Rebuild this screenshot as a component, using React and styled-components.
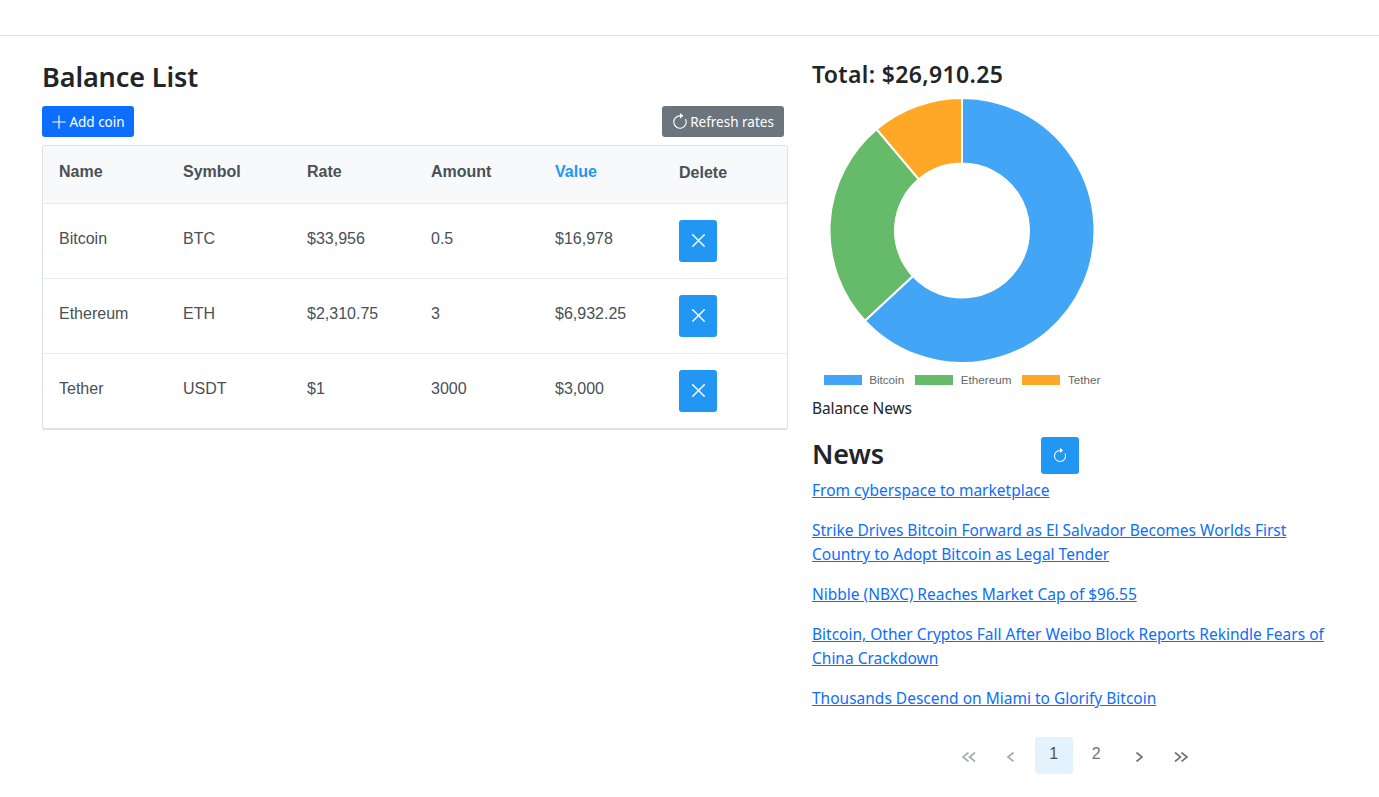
import React from 'react'
import styled, { createGlobalStyle } from 'styled-components'
import { BsPlusLg, BsArrowClockwise } from 'react-icons/bs'
import { X } from 'lucide-react'

const coins = [
  { name: 'Bitcoin', symbol: 'BTC', rate: '$33,956', amount: '0.5', value: '$16,978', raw: 16978, color: '#42A5F5' },
  { name: 'Ethereum', symbol: 'ETH', rate: '$2,310.75', amount: '3', value: '$6,932.25', raw: 6932.25, color: '#66BB6A' },
  { name: 'Tether', symbol: 'USDT', rate: '$1', amount: '3000', value: '$3,000', raw: 3000, color: '#FFA726' },
]

const news = [
  'From cyberspace to marketplace',
  'Strike Drives Bitcoin Forward as El Salvador Becomes Worlds First Country to Adopt Bitcoin as Legal Tender',
  'Nibble (NBXC) Reaches Market Cap of $96.55',
  'Bitcoin, Other Cryptos Fall After Weibo Block Reports Rekindle Fears of China Crackdown',
  'Thousands Descend on Miami to Glorify Bitcoin',
]

const polar = (cx, cy, r, deg) => {
  const rad = ((deg - 90) * Math.PI) / 180
  return [cx + r * Math.cos(rad), cy + r * Math.sin(rad)]
}

const slicePath = (start, end) => {
  const cx = 150
  const cy = 133.5
  const outer = 132.5
  const inner = 67
  const large = end - start > 180 ? 1 : 0
  const [x1, y1] = polar(cx, cy, outer, start)
  const [x2, y2] = polar(cx, cy, outer, end)
  const [x3, y3] = polar(cx, cy, inner, end)
  const [x4, y4] = polar(cx, cy, inner, start)
  return `M${x1} ${y1}A${outer} ${outer} 0 ${large} 1 ${x2} ${y2}L${x3} ${y3}A${inner} ${inner} 0 ${large} 0 ${x4} ${y4}Z`
}

const Donut = () => {
  const total = coins.reduce((sum, c) => sum + c.raw, 0)
  let angle = 0
  return (
    <ChartSvg viewBox="0 0 300 267" width="300" height="267">
      {coins.map((c) => {
        const start = angle
        angle += (c.raw / total) * 360
        return <path key={c.name} d={slicePath(start, angle)} fill={c.color} stroke="#fff" strokeWidth="2" />
      })}
    </ChartSvg>
  )
}

const chevrons = {
  first: 'M6.5 .5 1 5l5.5 4.5M13 .5 7.5 5l5.5 4.5',
  prev: 'M9.5 .5 4 5l5.5 4.5',
  next: 'M4.5 .5 10 5 4.5 9.5',
  last: 'M1 .5 6.5 5 1 9.5M7.5 .5 13 5 7.5 9.5',
}

const Chevron = ({ type }) => (
  <svg width="14" height="10" viewBox="0 0 14 10" fill="none" stroke="currentColor" strokeWidth="1.7">
    <path d={chevrons[type]} />
  </svg>
)

const App = () => {
  return (
    <>
      <GlobalStyle />
      <TopBar />
      <Page>
        <LeftColumn>
          <Title>Balance List</Title>
          <Toolbar>
            <ToolButton $bg="#0d6efd" $width={92}>
              <BsPlusLg size={18} />
              Add coin
            </ToolButton>
            <ToolButton $bg="#6c757d" $width={122}>
              <BsArrowClockwise size={18} />
              Refresh rates
            </ToolButton>
          </Toolbar>
          <TableCard>
            <Table>
              <thead>
                <tr>
                  <HeadCell>Name</HeadCell>
                  <HeadCell>Symbol</HeadCell>
                  <HeadCell>Rate</HeadCell>
                  <HeadCell>Amount</HeadCell>
                  <HeadCell $active>Value</HeadCell>
                  <HeadCell $plain>Delete</HeadCell>
                </tr>
              </thead>
              <tbody>
                {coins.map((c) => (
                  <tr key={c.name}>
                    <Cell>{c.name}</Cell>
                    <Cell>{c.symbol}</Cell>
                    <Cell>{c.rate}</Cell>
                    <Cell>{c.amount}</Cell>
                    <Cell>{c.value}</Cell>
                    <ActionCell>
                      <DeleteButton aria-label="Delete">
                        <X size={23} strokeWidth={1.5} />
                      </DeleteButton>
                    </ActionCell>
                  </tr>
                ))}
              </tbody>
            </Table>
          </TableCard>
        </LeftColumn>
        <RightColumn>
          <Total>Total: $26,910.25</Total>
          <ChartBox>
            <Donut />
            <Legend>
              {coins.map((c) => (
                <LegendItem key={c.name}>
                  <Swatch $color={c.color} />
                  {c.name}
                </LegendItem>
              ))}
            </Legend>
          </ChartBox>
          <Caption>Balance News</Caption>
          <NewsHead>
            <Title as="h2">News</Title>
            <RefreshButton aria-label="Refresh">
              <BsArrowClockwise size={16} />
            </RefreshButton>
          </NewsHead>
          <NewsList>
            {news.map((n) => (
              <NewsLink key={n} href="#">
                {n}
              </NewsLink>
            ))}
          </NewsList>
          <Pager>
            <PageButton $disabled><Chevron type="first" /></PageButton>
            <PageButton $disabled><Chevron type="prev" /></PageButton>
            <PageButton $active>1</PageButton>
            <PageButton $up>2</PageButton>
            <PageButton><Chevron type="next" /></PageButton>
            <PageButton><Chevron type="last" /></PageButton>
          </Pager>
        </RightColumn>
      </Page>
    </>
  )
}

export default App

const heading = `"Noto Sans", "Open Sans", sans-serif`
const body = `"Liberation Sans", Arial, sans-serif`

const GlobalStyle = createGlobalStyle`
  * {
    box-sizing: border-box;
  }
  body {
    margin: 0;
    background: #fff;
    color: #212529;
    font-family: ${heading};
    font-size: 16px;
    line-height: 24px;
  }
`

const TopBar = styled.div`
  height: 36px;
  border-bottom: 1px solid #dee2e6;
`

const Page = styled.div`
  display: flex;
  gap: 24px;
  padding: 24px 41px 0 42px;
`

const LeftColumn = styled.div`
  width: 746px;
  flex: none;
`

const RightColumn = styled.div`
  width: 526px;
  flex: none;
`

const Title = styled.h1`
  margin: 0;
  font-size: 27px;
  line-height: 34px;
  font-weight: 600;
  letter-spacing: -0.1px;
`

const Toolbar = styled.div`
  display: flex;
  justify-content: space-between;
  width: 742px;
  margin-top: 12px;
`

const ToolButton = styled.button`
  display: inline-flex;
  align-items: center;
  justify-content: center;
  gap: 1px;
  width: ${(p) => p.$width}px;
  height: 31px;
  padding: 0 1px 0 0;
  border: none;
  border-radius: 3px;
  background: ${(p) => p.$bg};
  color: #fff;
  font-family: ${heading};
  font-size: 13.5px;
  letter-spacing: 0;
`

const TableCard = styled.div`
  margin-top: 8px;
  border: 1px solid #dee2e6;
  border-bottom-width: 2px;
  border-radius: 3px;
  overflow: hidden;
`

const Table = styled.table`
  width: 744px;
  table-layout: fixed;
  border-collapse: collapse;
  font-family: ${body};
  font-size: 16px;
  color: #495057;
`

const HeadCell = styled.th`
  height: 57px;
  padding: ${(p) => (p.$plain ? '15px' : '14px')} 16px 0;
  vertical-align: top;
  text-align: left;
  font-weight: 700;
  background: #f8f9fa;
  border-bottom: 1px solid #e9ecef;
  color: ${(p) => (p.$active ? '#2196f3' : '#495057')};
`

const Cell = styled.td`
  height: 75px;
  padding: 23px 16px 0;
  vertical-align: top;
  border-bottom: 1px solid #e9ecef;
  tr:last-child & {
    border-bottom: none;
  }
`

const ActionCell = styled(Cell)`
  padding: 16px;
`

const DeleteButton = styled.button`
  display: flex;
  align-items: center;
  justify-content: center;
  width: 38px;
  height: 42px;
  padding: 0;
  border: none;
  border-radius: 3px;
  background: #2196f3;
  color: #fff;
`

const Total = styled.h4`
  margin: -1px 0 0;
  font-size: 23px;
  line-height: 30px;
  font-weight: 600;
  letter-spacing: 0.35px;
`

const ChartBox = styled.div`
  width: 300px;
  margin-top: 8px;
`

const ChartSvg = styled.svg`
  display: block;
`

const Legend = styled.div`
  display: flex;
  justify-content: center;
  gap: 11px;
  margin-top: 9px;
  font-family: ${body};
  font-size: 11.7px;
  line-height: 14px;
  color: #666;
  white-space: nowrap;
`

const LegendItem = styled.div`
  display: flex;
  align-items: center;
  gap: 7.5px;
`

const Swatch = styled.span`
  width: 38px;
  height: 10px;
  background: ${(p) => p.$color};
`

const Caption = styled.div`
  margin-top: 9px;
  letter-spacing: -0.1px;
  font-size: 15.5px;
`

const NewsHead = styled.div`
  display: flex;
  align-items: flex-start;
  margin-top: 17px;
  height: 37px;
  > h2 {
    width: 229px;
  }
`

const RefreshButton = styled.button`
  display: flex;
  align-items: center;
  justify-content: center;
  width: 38px;
  height: 37px;
  padding: 0;
  border: none;
  border-radius: 3px;
  background: #2196f3;
  color: #fff;
`

const NewsList = styled.div`
  display: flex;
  flex-direction: column;
  gap: 16px;
  margin-top: 4px;
`

const NewsLink = styled.a`
  color: #0d6efd;
  text-decoration: underline;
  font-size: 15.5px;
  letter-spacing: 0;
`

const Pager = styled.div`
  display: flex;
  justify-content: center;
  gap: 4.4px;
  margin-top: 27px;
`

const PageButton = styled.div`
  display: flex;
  align-items: center;
  justify-content: center;
  width: 38px;
  height: 37px;
  padding-bottom: ${(p) => (p.$up || p.$active ? '3px' : '0')};
  border-radius: 3px;
  font-family: ${body};
  font-size: 16px;
  background: ${(p) => (p.$active ? '#e3f2fd' : 'transparent')};
  color: ${(p) => (p.$active ? '#495057' : '#6c757d')};
  opacity: ${(p) => (p.$disabled ? 0.6 : 1)};
  svg {
    margin-top: 2px;
  }
`
